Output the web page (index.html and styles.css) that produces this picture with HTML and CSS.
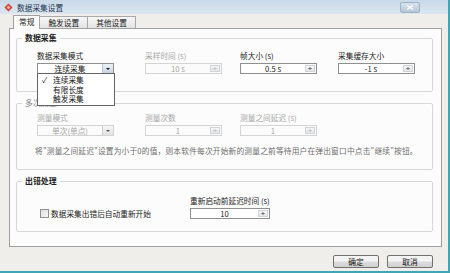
FILE: index.html
```html
<!DOCTYPE html>
<html lang="zh">
<head>
  <meta charset="UTF-8" />
  <title>数据采集设置</title>
  <link rel="stylesheet" href="styles.css">
</head>
<body>
  <div class="window">
    <div class="titlebar">
      <svg class="app-icon" width="9" height="9" viewBox="0 0 9 9">
        <path d="M4.5 0.5 L8.5 4.5 L4.5 8.5 L0.5 4.5 Z" fill="#d23a2a"/>
        <path d="M4.5 2.5 L6.5 4.5 L4.5 6.5 L2.5 4.5 Z" fill="#f6b0a0"/>
      </svg>
      <span class="title">数据采集设置</span>
      <div class="close-btn">
        <svg width="8" height="5" viewBox="0 0 8 5"><path d="M1 0.5 L7 4.5 M7 0.5 L1 4.5" stroke="#fff" stroke-width="1.3"/></svg>
      </div>
    </div>

    <div class="body">
      <div class="tabs">
        <div class="tab active">常规</div>
        <div class="tab">触发设置</div>
        <div class="tab">其他设置</div>
      </div>

      <div class="panel">
        <fieldset class="group g1">
          <legend>数据采集</legend>
          <div class="fields">
            <div class="field">
              <label>数据采集模式</label>
              <div class="combo">
                <span class="val">连续采集</span>
                <span class="drop"><i></i></span>
              </div>
              <ul class="droplist">
                <li><span class="check">✓</span>连续采集</li>
                <li>有限长度</li>
                <li>触发采集</li>
              </ul>
            </div>
            <div class="field disabled">
              <label>采样时间 (s)</label>
              <div class="spin"><span class="val">10 s</span><span class="arrows"></span></div>
            </div>
            <div class="field">
              <label>帧大小 (s)</label>
              <div class="spin"><span class="val">0.5 s</span><span class="arrows"></span></div>
            </div>
            <div class="field">
              <label>采集缓存大小</label>
              <div class="spin"><span class="val">-1 s</span><span class="arrows"></span></div>
            </div>
          </div>
        </fieldset>

        <fieldset class="group g2 disabled">
          <legend>多次测量</legend>
          <div class="fields">
            <div class="field">
              <label>测量模式</label>
              <div class="combo">
                <span class="val">单次(单点)</span>
                <span class="drop"><i></i></span>
              </div>
            </div>
            <div class="field">
              <label>测量次数</label>
              <div class="spin"><span class="val">1</span><span class="arrows"></span></div>
            </div>
            <div class="field">
              <label>测量之间延迟 (s)</label>
              <div class="spin"><span class="val">1</span><span class="arrows"></span></div>
            </div>
          </div>
          <p class="note">将"测量之间延迟"设置为小于0的值，则本软件每次开始新的测量之前等待用户在弹出窗口中点击"继续"按钮。</p>
        </fieldset>

        <fieldset class="group g3">
          <legend>出错处理</legend>
          <div class="error-row">
            <label class="checkline"><span class="checkbox"></span>数据采集出错后自动重新开始</label>
            <div class="field restart">
              <label>重新启动前延迟时间 (s)</label>
              <div class="spin"><span class="val">10</span><span class="arrows"></span></div>
            </div>
          </div>
        </fieldset>
      </div>

      <div class="buttons">
        <button class="btn">确定</button>
        <button class="btn">取消</button>
      </div>
    </div>
  </div>
</body>
</html>
```

FILE: styles.css
```css
body {
  margin: 0;
  font-family: "Noto Sans CJK SC", "Noto Sans", sans-serif;
  font-size: 7.7px;
  color: #222;
  background: #f0eeea;
}
.window {
  width: 448px;
  height: 271px;
  border-right: 2px solid #3ea6b4;
  border-bottom: 2px solid #3ea6b4;
  background: #f0eeea;
  display: flex;
  flex-direction: column;
  overflow: hidden;
}
.titlebar {
  height: 14px;
  display: flex;
  align-items: center;
  padding-left: 4px;
  background: linear-gradient(to bottom, #c9d9e8, #dbe6f1);
  flex-shrink: 0;
}
.app-icon {
  margin-right: 4px;
}
.title {
  color: #1f3550;
  font-size: 7.7px;
}
.close-btn {
  margin-left: auto;
  margin-right: 28px;
  width: 18px;
  height: 9px;
  border: 1px solid #9eb2c6;
  border-radius: 2px;
  background: linear-gradient(to bottom, #d8e2ec, #b7c6d6);
  display: flex;
  align-items: center;
  justify-content: center;
}
.close-btn svg {
  display: block;
}
.body {
  flex: 1;
  padding: 2px 6px 0 9px;
  display: flex;
  flex-direction: column;
}
.tabs {
  display: flex;
  height: 12px;
  padding-left: 5px;
  align-items: flex-end;
  position: relative;
  z-index: 2;
}
.tab {
  height: 11px;
  line-height: 11px;
  padding: 0 8px;
  border: 1px solid #a9a9a9;
  border-bottom: none;
  background: linear-gradient(to bottom, #f6f6f6, #e4e4e4);
  margin-left: -1px;
  font-size: 7.7px;
}
.tab.active {
  height: 13px;
  background: #fcfcfc;
  padding: 0 5px;
  margin-bottom: -1px;
  border-color: #a0a0a0;
}
.panel {
  height: 219px;
  width: 433px;
  box-sizing: border-box;
  border: 1px solid #a0a0a0;
  background: #fcfcfc;
  padding: 4px 8px 0 6px;
  position: relative;
}
.group {
  margin: 0 0 6px 0;
  border: 1px solid #d8d8d8;
  border-radius: 2px;
  padding: 0;
  min-width: 0;
}
.group legend {
  font-weight: bold;
  font-size: 7.9px;
  line-height: 10px;
  padding: 0 3px;
  margin-left: 5px;
  color: #222;
}
.g1 {
  height: 57px;
  position: relative;
  z-index: 3;
}
.g2 {
  height: 70px;
}
.g3 {
  height: 54px;
}
.fields {
  display: grid;
  grid-template-columns: 108px 95px 98px 77px;
  padding: 8px 0 0 20px;
}
.g2 .fields {
  padding-top: 5px;
}
.field {
  position: relative;
  display: flex;
  flex-direction: column;
}
.field label {
  line-height: 10px;
  height: 10px;
  margin-bottom: 2px;
  white-space: nowrap;
}
.combo, .spin {
  width: 77px;
  height: 11px;
  box-sizing: border-box;
  border: 1px solid #8e8f8f;
  background: #fff;
  display: flex;
  align-items: stretch;
}
.val {
  flex: 1;
  text-align: center;
  line-height: 9px;
  white-space: nowrap;
}
.drop {
  width: 10px;
  border-left: 1px solid #b8c6d4;
  background: linear-gradient(to bottom, #eef3f8, #c8d6e4);
  display: flex;
  align-items: center;
  justify-content: center;
}
.drop i {
  width: 0;
  height: 0;
  border-left: 2.5px solid transparent;
  border-right: 2.5px solid transparent;
  border-top: 2.5px solid #111;
}
.arrows {
  width: 8px;
  margin: 1px 1px 1px 0;
  border: 1px solid #cfd4d9;
  background: linear-gradient(to bottom, #f4f4f4 50%, #e8e8e8 50%);
  position: relative;
}
.arrows::before, .arrows::after {
  content: "";
  position: absolute;
  left: 2px;
  width: 0;
  height: 0;
  border-left: 2px solid transparent;
  border-right: 2px solid transparent;
}
.arrows::before {
  top: 1px;
  border-bottom: 2px solid #777;
}
.arrows::after {
  bottom: 1px;
  border-top: 2px solid #777;
}
.droplist {
  position: absolute;
  top: 22px;
  left: 0;
  width: 78px;
  box-sizing: border-box;
  margin: 0;
  padding: 1px 0;
  list-style: none;
  background: #fff;
  border: 1px solid #646464;
  z-index: 5;
}
.droplist li {
  height: 9.6px;
  line-height: 9.6px;
  padding-left: 15px;
  position: relative;
  color: #111;
}
.check {
  position: absolute;
  left: 4px;
}
.disabled label, .disabled .val {
  color: #a6a6a6;
}
.disabled .combo, .disabled .spin {
  border-color: #d4d4d4;
  background: #fbfbfb;
}
.disabled .arrows::before {
  border-bottom-color: #c4c4c4;
}
.disabled .arrows::after {
  border-top-color: #c4c4c4;
}
.disabled .drop {
  border-left-color: #ccc;
  background: linear-gradient(to bottom, #f6f6f6, #e2e2e2);
}
.disabled .drop i {
  border-top-color: #555;
}
.g2 legend {
  color: #8a8a8a;
  font-weight: normal;
}
.note {
  margin: 10px 0 0 18px;
  line-height: 10px;
  white-space: nowrap;
  letter-spacing: 0.2px;
  color: #6e6e6e;
}
.error-row {
  display: flex;
  align-items: flex-end;
  padding: 10px 0 0 23px;
}
.checkline {
  display: flex;
  align-items: center;
  width: 150px;
  height: 11px;
  color: #222;
}
.checkbox {
  width: 7px;
  height: 7px;
  border: 1px solid #8e8f8f;
  background: linear-gradient(to bottom right, #dcdcdc, #f8f8f8);
  margin-right: 2px;
}
.restart .spin {
  width: 80px;
}
.buttons {
  display: flex;
  justify-content: flex-end;
  gap: 8px;
  padding: 8px 9px 0 0;
}
.btn {
  width: 46px;
  height: 13px;
  padding: 0;
  font-family: "Noto Sans CJK SC", "Noto Sans", sans-serif;
  font-size: 7.7px;
  line-height: 10px;
  color: #111;
  border: 1px solid #707070;
  border-radius: 2px;
  background: linear-gradient(to bottom, #f4f4f4 45%, #dddddd 55%, #d0d0d0);
}
```
